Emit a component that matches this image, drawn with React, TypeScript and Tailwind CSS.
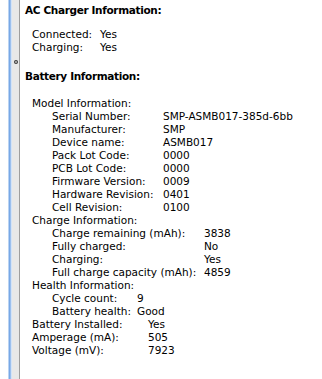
import React from 'react';

type Row = { label: string; value: string };

const font = { fontFamily: '"DejaVu Sans", "Noto Sans", sans-serif' };

const acRows: Row[] = [
  { label: 'Connected:', value: 'Yes' },
  { label: 'Charging:', value: 'Yes' },
];

const modelRows: Row[] = [
  { label: 'Serial Number:', value: 'SMP-ASMB017-385d-6bb' },
  { label: 'Manufacturer:', value: 'SMP' },
  { label: 'Device name:', value: 'ASMB017' },
  { label: 'Pack Lot Code:', value: '0000' },
  { label: 'PCB Lot Code:', value: '0000' },
  { label: 'Firmware Version:', value: '0009' },
  { label: 'Hardware Revision:', value: '0401' },
  { label: 'Cell Revision:', value: '0100' },
];

const chargeRows: Row[] = [
  { label: 'Charge remaining (mAh):', value: '3838' },
  { label: 'Fully charged:', value: 'No' },
  { label: 'Charging:', value: 'Yes' },
  { label: 'Full charge capacity (mAh):', value: '4859' },
];

const healthRows: Row[] = [
  { label: 'Cycle count:', value: '9' },
  { label: 'Battery health:', value: 'Good' },
];

const bottomRows: Row[] = [
  { label: 'Battery Installed:', value: 'Yes' },
  { label: 'Amperage (mA):', value: '505' },
  { label: 'Voltage (mV):', value: '7923' },
];

// labelWidth = value column x minus label x
const Rows = ({ rows, labelWidth }: { rows: Row[]; labelWidth: string }) => (
  <div>
    {rows.map((r) => (
      <div key={r.label} className="flex h-[13px] items-center whitespace-nowrap">
        <span className={`${labelWidth} shrink-0`}>{r.label}</span>
        <span>{r.value}</span>
      </div>
    ))}
  </div>
);

const Sub = ({ title }: { title: string }) => (
  <div className="flex h-[13px] items-center whitespace-nowrap">{title}</div>
);

export default function App() {
  return (
    <div className="flex h-[379px] w-[322px] overflow-hidden bg-white text-[10.5px] leading-[13px] text-black" style={font}>
      {/* split view edge */}
      <div className="flex w-[20px] shrink-0">
        <div className="w-[8px] bg-white" />
        <div className="w-[1px] bg-[#b9d3f3]" />
        <div className="w-[1px] bg-[#78a8e6]" />
        <div className="w-[1px] bg-[#9cc0ee]" />
        <div className="w-[1px] bg-[#d4e3f6]" />
        <div className="relative w-[7px] bg-[#e8e8e8]">
          <div className="absolute left-[2px] top-[60px] h-[4px] w-[4px] rounded-full bg-[#3a3a3a]" />
          <div className="absolute left-[3px] top-[61px] h-[2px] w-[2px] bg-[#9a9a9a]" />
        </div>
        <div className="w-[1px] bg-[#9e9e9e]" />
      </div>

      <div className="flex-1 pl-[5px] pt-[4px]">
        <div className="flex h-[13px] items-center whitespace-nowrap font-bold tracking-[-0.35px]">AC Charger Information:</div>

        <div className="mt-[11px] pl-[7px]">
          <Rows rows={acRows} labelWidth="w-[68px]" />
        </div>

        <div className="mt-[16px] flex h-[13px] items-center whitespace-nowrap font-bold tracking-[-0.35px]">Battery Information:</div>

        <div className="mt-[14px] pl-[7px]">
          <Sub title="Model Information:" />
          <div className="pl-[20px]">
            <Rows rows={modelRows} labelWidth="w-[111px]" />
          </div>
          <Sub title="Charge Information:" />
          <div className="pl-[20px]">
            <Rows rows={chargeRows} labelWidth="w-[152px]" />
          </div>
          <Sub title="Health Information:" />
          <div className="pl-[20px]">
            <Rows rows={healthRows} labelWidth="w-[85px]" />
          </div>
          <Rows rows={bottomRows} labelWidth="w-[116px]" />
        </div>
      </div>
    </div>
  );
}
